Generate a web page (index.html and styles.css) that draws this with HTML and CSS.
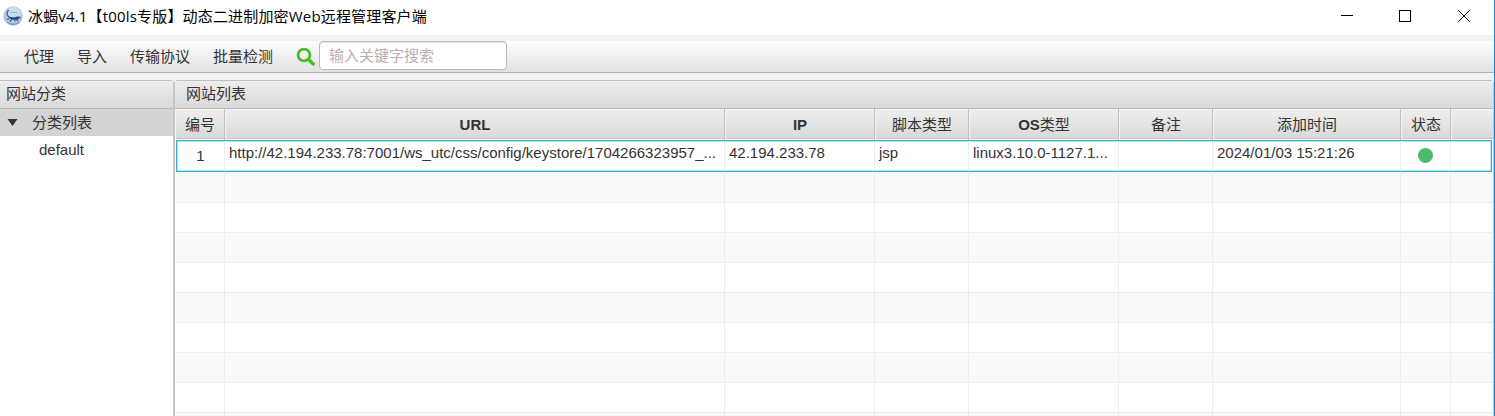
FILE: index.html
```html
<!DOCTYPE html>
<html lang="zh-CN">
<head>
<meta charset="utf-8">
<title>冰蝎v4.1</title>
<link rel="stylesheet" href="styles.css">
</head>
<body>
<div class="window">
  <header class="titlebar">
    <svg class="logo" width="20" height="20" viewBox="0 0 20 20">
      <circle cx="10" cy="10" r="9.700" fill="#aec4e0"/>
      <circle cx="10.500" cy="8.500" r="7.400" fill="#cbdcef"/>
      <path d="M7 6.500h8" stroke="#9fb4cf" stroke-width="1"/>
      <path d="M5.800 4.200C3.800 5.500 3.500 8 4.800 9.800c1 1.500 2.700 2 4.400 2.200M4 13.500l4-1.500M7 15.500l2.500-3M12 15.500l-1-3M15 15l-2-2.500" stroke="#35588f" stroke-width="1.300" fill="none"/>
      <path d="M7 11.200c2-.7 3.800.5 5.500-.2 1.500-.6 3-.6 4.800-.2l.2 1.500c-1.500.2-2.200 1.300-4 1.500-2.500.3-5 .3-6.500-2.600z" fill="#2c4c84"/>
      <path d="M4 16.300c3.500 2.400 8.500 2.600 12.500.2" stroke="#7796c2" stroke-width="1.200" fill="none"/>
    </svg>
    <span class="title">冰蝎v4.1【t00ls专版】动态二进制加密Web远程管理客户端</span>
    <svg class="controls" width="130" height="14" viewBox="0 0 130 14" fill="none" stroke="#000" stroke-width="1">
      <path d="M0 6.500h12" shape-rendering="crispEdges"/>
      <path d="M58.500 1.500h11v11h-11z" shape-rendering="crispEdges"/>
      <path d="M117.200 1.200l11.600 11.600M128.800 1.200l-11.600 11.600"/>
    </svg>
  </header>
  <nav class="toolbar">
    <span>代理</span><span>导入</span><span>传输协议</span><span>批量检测</span>
    <svg class="search-icon" width="20" height="20" viewBox="0 0 20 20" fill="none" stroke="#4cbb2a">
      <circle cx="8" cy="8" r="5.900" stroke-width="2.800"/>
      <path d="M12.500 12.500l4.800 4.500" stroke-width="3.400" stroke-linecap="round"/>
    </svg>
    <input class="search" type="text" placeholder="输入关键字搜索">
  </nav>
  <main class="panels">
    <section class="sidebar">
      <h2 class="panel-title">网站分类</h2>
      <div class="tree-root"><svg width="11" height="7" viewBox="0 0 11 7"><path d="M.5 0h10L5.500 7z" fill="#333"/></svg><span>分类列表</span></div>
      <div class="tree-leaf">default</div>
    </section>
    <section class="list">
      <h2 class="panel-title list-title">网站列表</h2>
      <div class="row head">
        <div>编号</div><div><b>URL</b></div><div><b>IP</b></div><div>脚本类型</div><div><b>OS</b>类型</div><div>备注</div><div>添加时间</div><div>状态</div><div></div>
      </div>
      <div class="row selected">
        <div class="num">1</div><div class="url">http://42.194.233.78:7001/ws_utc/css/config/keystore/1704266323957_...</div><div>42.194.233.78</div><div>jsp</div><div>linux3.10.0-1127.1...</div><div></div><div>2024/01/03 15:21:26</div><div class="status"><i class="dot"></i></div><div></div>
      </div>
      <div class="row shaded"><div></div><div></div><div></div><div></div><div></div><div></div><div></div><div></div><div></div></div>
      <div class="row"><div></div><div></div><div></div><div></div><div></div><div></div><div></div><div></div><div></div></div>
      <div class="row shaded"><div></div><div></div><div></div><div></div><div></div><div></div><div></div><div></div><div></div></div>
      <div class="row"><div></div><div></div><div></div><div></div><div></div><div></div><div></div><div></div><div></div></div>
      <div class="row shaded"><div></div><div></div><div></div><div></div><div></div><div></div><div></div><div></div><div></div></div>
      <div class="row"><div></div><div></div><div></div><div></div><div></div><div></div><div></div><div></div><div></div></div>
      <div class="row shaded"><div></div><div></div><div></div><div></div><div></div><div></div><div></div><div></div><div></div></div>
      <div class="row"><div></div><div></div><div></div><div></div><div></div><div></div><div></div><div></div><div></div></div>
      <div class="row shaded"><div></div><div></div><div></div><div></div><div></div><div></div><div></div><div></div><div></div></div>
    </section>
  </main>
</div>
</body>
</html>
```
FILE: styles.css
```css
* { box-sizing: border-box; }
body {
  margin: 0;
  overflow: hidden;
  font: 15px/20px "Liberation Sans", "Noto Sans CJK SC", sans-serif;
  color: #333;
}
.window {
  display: flex;
  flex-direction: column;
  height: 416px;
  background: #f3f3f3;
  border-right: 1px solid #1883d7;
  white-space: nowrap;
}
.titlebar {
  display: flex;
  align-items: center;
  height: 35px;
  padding: 0 23px 3px 3px;
  background: #fff;
  color: #000;
}
.title {
  margin-left: 5px;
  font-family: "Open Sans", "Noto Sans CJK SC", sans-serif;
  letter-spacing: 0.17px;
}
.controls { margin-left: auto; }
.toolbar {
  display: flex;
  align-items: center;
  height: 32px;
  margin: 6px 0 7px;
  padding-left: 24px;
  background: linear-gradient(#fdfdfd, #e2e2e2);
  border-bottom: 1px solid #b2b2b2;
}
.toolbar span { margin-right: 23px; }
.search-icon { margin: 0 3px 0 0; }
.search {
  width: 188px;
  height: 29px;
  margin-bottom: 2px;
  padding: 0 9px 1px;
  border: 1px solid #b9b9b9;
  border-radius: 4px;
  background: #fff;
  box-shadow: inset 0 1px 1px #e6e6e6;
  font: inherit;
}
.search::placeholder { color: #b9b0b0; opacity: 1; }
.panels {
  display: grid;
  grid-template-columns: 174px 1fr;
  flex: 1;
  min-height: 0;
}
.sidebar, .list {
  background: #fff;
  border-right: 1px solid #c6c6c6;
  border-radius: 0 4px 0 0;
  overflow: hidden;
}
.list {
  border-left: 1px solid #c6c6c6;
  border-radius: 4px 4px 0 0;
}
.panel-title {
  height: 29px;
  margin: 0;
  padding: 3px 6px;
  border-top: 1px solid #bfbfbf;
  border-bottom: 1px solid #b9b9b9;
  background: linear-gradient(#ededed, #d9d9d9);
  font-size: 15px;
  font-weight: 400;
}
.list-title { padding-left: 11px; }
.tree-root {
  display: flex;
  align-items: center;
  gap: 14px;
  height: 27px;
  padding-left: 7px;
  background: #d3d3d3;
}
.tree-leaf { padding: 4px 0 0 39px; }
.row {
  display: grid;
  grid-template-columns: 50px 500px 150px 94px 150px 94px 188px 50px 1fr;
  height: 30px;
  border-bottom: 1px solid #ededed;
}
.row > div { border-right: 1px solid #ededed; }
.row > div:last-child { border-right: 0; }
.shaded { background: #f9f9f9; }
.head {
  background: linear-gradient(#efefef, #d9d9d9);
  border-bottom-color: #c4c4c4;
  line-height: 31px;
  text-align: center;
}
.head > div {
  padding-left: 1px;
  border-right-color: #bfbfbf;
  box-shadow: inset 1px 1px #f4f4f4;
}
.selected {
  height: 32px;
  margin: 1px 1px;
  grid-template-columns: 48px 500px 150px 94px 150px 94px 188px 50px 1fr;
  border: 1px solid #3fa9cf;
  box-shadow: inset 0 0 0 1px #b9e0f0;
}
.selected > div { padding: 2px 0 0 4px; }
.selected .num { padding: 5px 0 0; text-align: center; }
.selected .status { display: flex; align-items: center; justify-content: center; padding: 0 0 2px; }
.dot {
  width: 15px;
  height: 15px;
  border-radius: 50%;
  background: #4dbb6c;
}
```
